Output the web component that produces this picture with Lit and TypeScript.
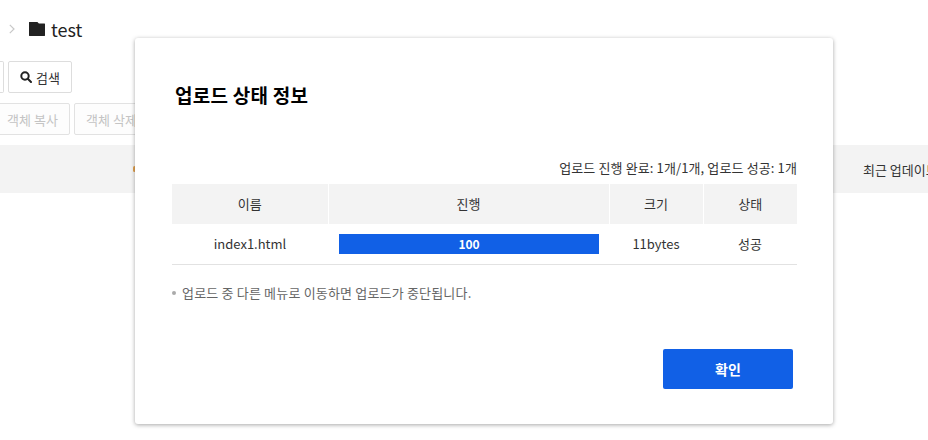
import { LitElement, html, css } from 'lit'
import { customElement } from 'lit/decorators.js'

@customElement('app-root')
export class AppRoot extends LitElement {
  static styles = css`
    :host {
      display: block;
      position: relative;
      width: 928px;
      height: 440px;
      overflow: hidden;
      background: #fff;
      font-family: "Noto Sans CJK KR", "Noto Sans", sans-serif;
      color: #333;
    }

    .crumb {
      display: flex;
      align-items: center;
      height: 58px;
      margin-bottom: 3px;
      padding: 0 0 0 9px;
      box-sizing: border-box;
    }
    .crumb .chev { width: 6px; height: 10px; margin-right: 14px; }
    .crumb .folder { width: 16px; height: 14px; margin-right: 6px; }
    .crumb .name { font-size: 18px; color: #222; line-height: 1; }

    .row {
      display: flex;
      gap: 4px;
      height: 32px;
      margin-bottom: 10px;
    }
    .btn {
      box-sizing: border-box;
      height: 32px;
      border: 1px solid #ddd;
      border-radius: 2px;
      background: #fff;
      display: flex;
      align-items: center;
      justify-content: center;
      font-size: 13px;
      gap: 4px;
      color: #333;
      white-space: nowrap;
    }
    .btn.stub { width: 4px; border-left: none; border-radius: 0 2px 2px 0; }
    .btn.search { width: 64px; }
    .btn.search svg { width: 12px; height: 12px; }
    .btn.off { color: #c4c4c4; border-color: #e2e2e2; background: #fdfdfd; }
    .btn.copy { width: 75px; margin-left: -5px; flex: none; }
    .btn.del { width: 75px; flex: none; }

    .thead {
      display: flex;
      justify-content: space-between;
      align-items: center;
      height: 48px;
      padding-left: 133px;
      box-sizing: border-box;
      background: #f3f3f3;
      font-size: 13px;
      color: #333;
      white-space: nowrap;
      overflow: hidden;
    }
    .thead span { width: 65px; }
    .thead i {
      width: 3px;
      height: 6px;
      border-radius: 2px;
      background: #e0a050;
    }

    .modal {
      position: absolute;
      left: 135px;
      top: 38px;
      width: 698px;
      height: 386px;
      box-sizing: border-box;
      padding: 0 36px 0 37px;
      background: #fff;
      border-radius: 3px;
      box-shadow: 0 1px 4px rgba(0, 0, 0, 0.35);
      display: flex;
      flex-direction: column;
    }
    h2 {
      margin: 0;
      padding: 0 0 0 3px;
      height: 121px;
      line-height: 114px;
      font-size: 19px;
      letter-spacing: 0.25px;
      font-weight: 700;
      color: #000;
    }
    .summary {
      height: 25px;
      line-height: 18px;
      text-align: right;
      font-size: 13px;
      letter-spacing: 0.12px;
      color: #333;
    }
    table {
      width: 625px;
      border-collapse: collapse;
      table-layout: fixed;
    }
    th {
      height: 40px;
      padding: 0 0 2px;
      box-sizing: border-box;
      background: #f3f3f3;
      border-left: 1px solid #fff;
      font-size: 13px;
      font-weight: 400;
      color: #333;
    }
    th:first-child { border-left: none; }
    td {
      height: 40px;
      padding: 0;
      box-sizing: border-box;
      border-bottom: 1px solid #e2e2e2;
      text-align: center;
      font-size: 13px;
      color: #333;
    }
    .bar {
      margin: 0 10px 0 11px;
      height: 20px;
      line-height: 20px;
      background: #1160e6;
      color: #fff;
      font-size: 12px;
      font-weight: 700;
    }
    .note {
      display: flex;
      align-items: center;
      gap: 6px;
      margin-top: 18px;
      height: 20px;
      font-size: 13px;
      letter-spacing: 0.18px;
      color: #666;
    }
    .note i {
      width: 4px;
      height: 4px;
      border-radius: 50%;
      background: #aaa;
    }
    .foot {
      display: flex;
      justify-content: flex-end;
      margin-top: 46px;
      padding-right: 4px;
    }
    .ok {
      width: 130px;
      height: 40px;
      border: none;
      border-radius: 2px;
      background: #1160e6;
      color: #fff;
      font-family: inherit;
      font-size: 14px;
      font-weight: 700;
    }
  `

  render() {
    return html`
      <div class="crumb">
        <svg class="chev" viewBox="0 0 6 10" fill="none" stroke="#c8c8c8" stroke-width="1.2"><path d="M0.8 0.8 5 5 0.8 9.2"/></svg>
        <svg class="folder" viewBox="0 0 16 14" fill="#222"><path d="M0 .4C0 .2.2 0 .4 0h8l1.5 1.6h5.7c.2 0 .4.2.4.4v11.6c0 .2-.2.4-.4.4H.4c-.2 0-.4-.2-.4-.4z"/></svg>
        <span class="name">test</span>
      </div>
      <div class="row">
        <div class="btn stub"></div>
        <div class="btn search">
          <svg viewBox="0 0 12 12" fill="none" stroke="#222" stroke-width="2"><circle cx="5" cy="5" r="3.7"/><path d="M7.8 7.8 11 11" stroke-linecap="round"/></svg>
          <span>검색</span>
        </div>
      </div>
      <div class="row">
        <div class="btn off copy">객체 복사</div>
        <div class="btn off del">객체 삭제</div>
      </div>
      <div class="thead"><i></i><span>최근 업데이트</span></div>

      <div class="modal">
        <h2>업로드 상태 정보</h2>
        <div class="summary">업로드 진행 완료: 1개/1개, 업로드 성공: 1개</div>
        <table>
          <colgroup>
            <col style="width:156px" /><col style="width:281px" /><col style="width:94px" /><col style="width:94px" />
          </colgroup>
          <thead>
            <tr><th>이름</th><th>진행</th><th>크기</th><th>상태</th></tr>
          </thead>
          <tbody>
            <tr>
              <td>index1.html</td>
              <td><div class="bar">100</div></td>
              <td>11bytes</td>
              <td>성공</td>
            </tr>
          </tbody>
        </table>
        <div class="note"><i></i><span>업로드 중 다른 메뉴로 이동하면 업로드가 중단됩니다.</span></div>
        <div class="foot"><button class="ok">확인</button></div>
      </div>
    `
  }
}
